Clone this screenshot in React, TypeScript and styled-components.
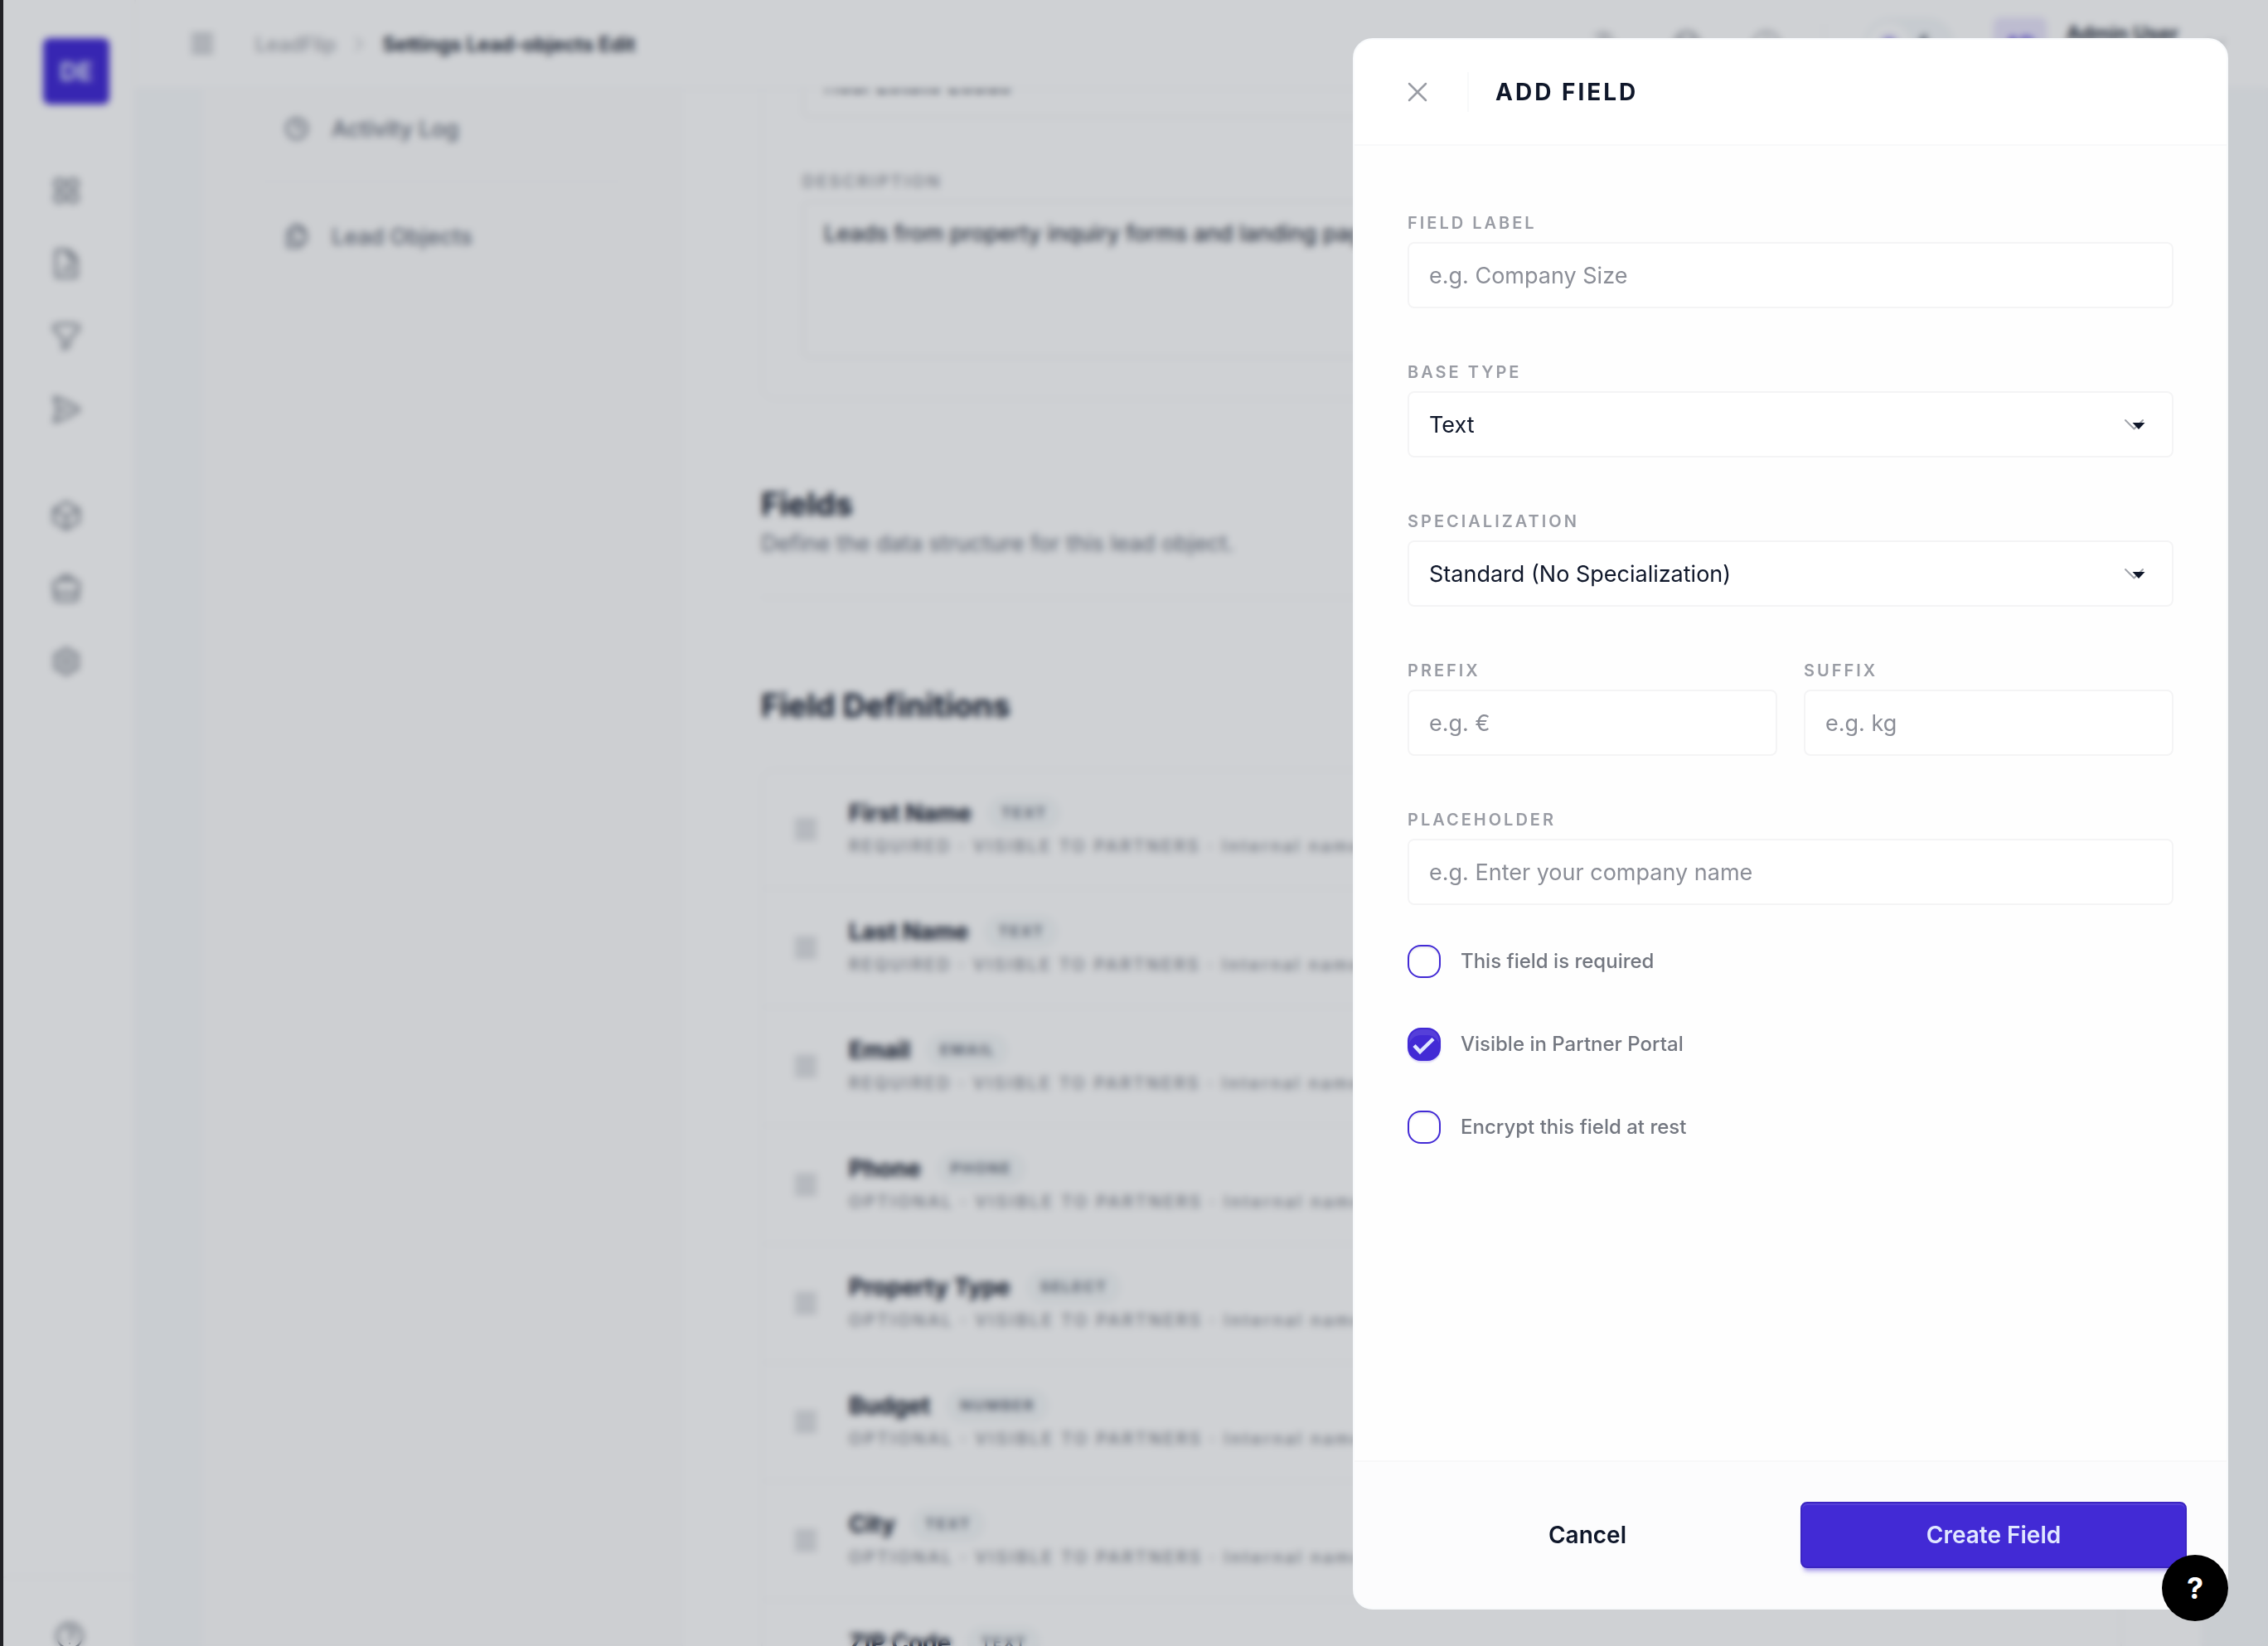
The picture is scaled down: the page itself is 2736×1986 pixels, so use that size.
import React, { useId } from "react";
import styled, { createGlobalStyle } from "styled-components";
import {
  HiOutlineBriefcase,
  HiOutlineChevronDown,
  HiOutlineChevronRight,
  HiOutlineClock,
  HiOutlineCog6Tooth,
  HiOutlineCube,
  HiOutlineDocumentChartBar,
  HiOutlineDocumentDuplicate,
  HiOutlineFunnel,
  HiOutlineGlobeAlt,
  HiOutlineLanguage,
  HiOutlinePaperAirplane,
  HiOutlinePencilSquare,
  HiOutlineQuestionMarkCircle,
  HiOutlineSquares2X2,
  HiOutlineTrash,
  HiMoon,
  HiSun,
} from "react-icons/hi2";

const ink = "#0f172a";
const primary = "#422ad5";
const line = "#f4f4f5";
const softLine = "#f8f9fa";
const muted = "#9fa2a9";

const GlobalStyle = createGlobalStyle`
  *, *::before, *::after { box-sizing: border-box; }
  body { margin: 0; background: #fff; }
  button, input, select, textarea { font: inherit; color: inherit; }
  h1, h2, h3, p { margin: 0; }
`;

const Shell = styled.div`
  position: relative;
  height: 100vh;
  overflow: hidden;
  border-left: 4px solid #222226;
  font-family: Inter, "Liberation Sans", sans-serif;
  font-size: 27px;
  color: ${ink};
`;

const Page = styled.div`
  display: flex;
  height: 100%;
  background: #f8fafc;
`;

/* ---------- sidebar ---------- */

const Sidebar = styled.aside`
  flex: 0 0 160px;
  display: flex;
  flex-direction: column;
  background: #fff;
  border-right: 2px solid ${softLine};
`;

const Logo = styled.div`
  display: grid;
  place-items: center;
  width: 80px;
  height: 80px;
  margin: 46px 0 64px 48px;
  border-radius: 8px;
  background: ${primary};
  color: #e0e7ff;
  font-size: 30px;
  font-weight: 700;
`;

const IconNav = styled.nav`
  display: flex;
  flex-direction: column;
  gap: 48px;
  padding: 0 36px;
`;

const IconGroup = styled.div`
  display: flex;
  flex-direction: column;
  align-items: flex-start;
  gap: 8px;
`;

const IconLink = styled.a`
  display: grid;
  place-items: center;
  width: 80px;
  height: 80px;
  color: #5f6672;
  svg { width: 40px; height: 40px; }
`;

const SidebarFoot = styled.div`
  margin-top: auto;
  height: 84px;
  padding: 30px 36px 0 40px;
  border-top: 2px solid ${softLine};
`;

/* ---------- top bar ---------- */

const Column = styled.div`
  flex: 1;
  min-width: 0;
  display: flex;
  flex-direction: column;
`;

const TopBar = styled.header`
  flex: 0 0 108px;
  display: flex;
  align-items: center;
  justify-content: space-between;
  padding: 0 48px 0 66px;
  background: #fff;
  border-bottom: 2px solid ${softLine};
`;

const MenuButton = styled.button`
  display: grid;
  place-items: center;
  padding: 0;
  border: 0;
  background: none;
  color: #b9bcc2;
`;

const BarButton = styled(MenuButton)`
  color: #a1a4ab;
  svg { width: 40px; height: 40px; }
`;

const Crumbs = styled.nav`
  display: flex;
  align-items: center;
  gap: 16px;
  font-size: 24px;
  font-weight: 500;
  color: #a6a9b0;
  a { color: inherit; text-decoration: none; margin-left: 34px; }
  strong { font-weight: 600; color: ${ink}; }
`;

const BarTools = styled.div`
  display: flex;
  align-items: center;
  gap: 48px;
`;

const BarIcons = styled.div`
  display: flex;
  gap: 56px;
`;

const Rule = styled.span`
  width: 2px;
  height: 48px;
  background: ${softLine};
`;

const ThemeSwitch = styled.button`
  display: flex;
  align-items: center;
  gap: 8px;
  height: 64px;
  padding: 4px 16px 4px 4px;
  border: 0;
  border-radius: 32px;
  background: #f5f8fa;
  color: #6b7280;
  svg { width: 28px; height: 28px; }
`;

const Thumb = styled.span`
  display: grid;
  place-items: center;
  width: 52px;
  height: 52px;
  border-radius: 50%;
  background: #fff;
  color: ${primary};
`;

const User = styled.div`
  display: flex;
  align-items: center;
  gap: 24px;
  svg { width: 28px; height: 28px; margin-left: 8px; color: ${muted}; }
`;

const Avatar = styled.span`
  display: grid;
  place-items: center;
  width: 64px;
  height: 64px;
  border-radius: 8px;
  background: #e9e5fb;
  color: ${primary};
  font-size: 24px;
  font-weight: 700;
`;

const UserText = styled.span`
  display: flex;
  flex-direction: column;
  font-size: 24px;
  line-height: 30px;
  font-weight: 600;
  small { font-size: 20px; line-height: 24px; font-weight: 500; color: ${muted}; }
`;

/* ---------- page body ---------- */

const Sheet = styled.main`
  flex: 1;
  min-height: 0;
  display: flex;
  margin: 0 80px;
  overflow: hidden;
  background: #fff;
`;

const SubNav = styled.nav`
  flex: 0 0 580px;
  padding: 4px 72px 0;
  background: #fdfdfd;
  border-right: 2px solid #fbfbfc;
`;

const SubLink = styled.a`
  display: flex;
  align-items: center;
  gap: 26px;
  height: 86px;
  padding-left: 26px;
  font-weight: 500;
  color: #6b7280;
  text-decoration: none;
  svg { width: 32px; height: 32px; stroke-width: 2; }
`;

const SubRule = styled.hr`
  height: 2px;
  margin: 20px 0 22px;
  border: 0;
  background: #fafafb;
`;

const Content = styled.div`
  flex: 1;
  min-width: 0;
  margin-top: -148px;
  padding: 0 96px 0 94px;
`;

const Card = styled.section`
  display: flex;
  flex-direction: column;
  gap: 48px;
  padding: 48px;
  border: 2px solid ${softLine};
  border-radius: 16px;
`;

const SectionTitle = styled.h2<{ $top: number }>`
  margin-top: ${(p) => p.$top}px;
  font-size: 38px;
  line-height: 48px;
  font-weight: 700;
`;

const SectionNote = styled.p`
  line-height: 48px;
  padding-bottom: 40px;
  border-bottom: 2px solid ${softLine};
  color: #6b7280;
`;

const FieldList = styled.ul`
  margin: 53px 0 0;
  padding: 0;
  list-style: none;
  border: 2px solid ${softLine};
  border-radius: 16px;
`;

const FieldRow = styled.li`
  display: flex;
  align-items: center;
  gap: 32px;
  height: 143px;
  padding: 0 40px 0 32px;
  border-bottom: 2px solid ${softLine};
`;

const Handle = styled.span`
  display: grid;
  place-items: center;
  width: 40px;
  color: #c9ccd1;
`;

const RowText = styled.div`
  flex: 1;
  display: flex;
  flex-direction: column;
  min-width: 0;
`;

const RowTitle = styled.h3`
  display: flex;
  align-items: center;
  gap: 20px;
  font-size: 28px;
  line-height: 40px;
  font-weight: 700;
`;

const Badge = styled.span`
  padding: 0 16px;
  border-radius: 20px;
  background: #f6f9fa;
  color: #6b7280;
  font-size: 18px;
  font-weight: 700;
  letter-spacing: 2px;
`;

const RowMeta = styled.p`
  font-size: 20px;
  line-height: 40px;
  font-weight: 500;
  letter-spacing: 3px;
  color: #868a93;
`;

const RowTools = styled.div`
  display: flex;
  gap: 28px;
  color: ${muted};
  svg { width: 32px; height: 32px; }
`;

/* ---------- form parts ---------- */

const FieldBox = styled.div`
  display: flex;
  flex-direction: column;
  gap: 8px;
  padding-top: 14px;
  flex: 1;
  min-width: 0;
`;

const Label = styled.label`
  font-size: 20px;
  line-height: 30px;
  font-weight: 600;
  letter-spacing: 3px;
  text-transform: uppercase;
  color: #999ca4;
`;

const Input = styled.input`
  width: 100%;
  height: 80px;
  padding: 0 24px;
  border: 2px solid ${line};
  border-radius: 8px;
  background: #fff;
  outline: none;
  &::placeholder { color: #8b8e97; opacity: 1; }
`;

const TextArea = styled.textarea`
  width: 100%;
  height: 190px;
  padding: 16px 24px;
  border: 2px solid ${line};
  border-radius: 8px;
  background: #fff;
  line-height: 44px;
  resize: none;
`;

const SelectWrap = styled.div`
  position: relative;
  display: grid;
  svg {
    position: absolute;
    right: 32px;
    top: 32px;
    width: 28px;
    height: 16px;
    pointer-events: none;
  }
`;

const Select = styled.select`
  appearance: none;
  height: 80px;
  padding: 0 72px 0 24px;
  border: 2px solid ${line};
  border-radius: 8px;
  background: #fff;
  outline: none;
`;

/* ---------- drawer ---------- */

const Overlay = styled.div`
  position: absolute;
  inset: 0;
  display: flex;
  justify-content: flex-end;
  padding: 46px 48px 44px;
  background: rgba(15, 23, 42, 0.2);
  backdrop-filter: blur(4px);
`;

const Drawer = styled.section`
  display: flex;
  flex-direction: column;
  width: 1056px;
  max-width: 100%;
  overflow: hidden;
  border: 2px solid #f8fafc;
  border-radius: 24px;
  background: #fefefe;
`;

const DrawerHead = styled.header`
  flex: 0 0 128px;
  display: flex;
  align-items: center;
  gap: 32px;
  padding: 0 52px;
  border-bottom: 2px solid ${softLine};
  background: #fff;
`;

const CloseButton = styled.button`
  display: grid;
  place-items: center;
  width: 48px;
  height: 48px;
  margin-right: 4px;
  padding: 0;
  border: 0;
  background: none;
  color: #9a9da5;
`;

const DrawerTitle = styled.h1`
  font-size: 28px;
  font-weight: 700;
  letter-spacing: 3px;
  text-transform: uppercase;
`;

const Form = styled.form`
  flex: 1;
  min-height: 0;
  display: flex;
  flex-direction: column;
`;

const DrawerBody = styled.div`
  flex: 1;
  min-height: 0;
  display: flex;
  flex-direction: column;
  gap: 48px;
  padding: 64px;
  & > * { flex: none; }
`;

const Pair = styled.div`
  display: flex;
  gap: 32px;
`;

const Checks = styled.div`
  display: flex;
  flex-direction: column;
  gap: 60px;
`;

const CheckLabel = styled.label`
  display: flex;
  align-items: center;
  gap: 24px;
  font-size: 24px;
  line-height: 40px;
  font-weight: 500;
  color: #737780;
`;

const CheckMark = styled.span`
  display: grid;
  width: 40px;
  height: 40px;
  svg, input { grid-area: 1 / 1; }
  svg { width: 40px; height: 40px; pointer-events: none; visibility: hidden; z-index: 1; }
  input:checked + svg { visibility: visible; }
`;

const CheckInput = styled.input`
  appearance: none;
  width: 40px;
  height: 40px;
  margin: 0;
  border: 2px solid ${primary};
  border-radius: 16px;
  background: #fff;
  box-shadow: inset 0 2px 2px rgba(15, 23, 42, 0.08);
  &:checked {
    background: ${primary};
    box-shadow: inset 0 8px 0 -1px rgba(255, 255, 255, 0.1), 0 2px 2px rgba(66, 42, 213, 0.2);
  }
`;

const DrawerFoot = styled.footer`
  display: flex;
  gap: 24px;
  padding: 48px;
  border-top: 2px solid #f8f8f9;
  background: #fcfcfd;
`;

const ActionButton = styled.button<{ $primary?: boolean }>`
  flex: 1;
  height: 80px;
  border: 2px solid ${(p) => (p.$primary ? "#3b25c1" : "transparent")};
  border-radius: 8px;
  background: ${(p) => (p.$primary ? primary : "transparent")};
  color: ${(p) => (p.$primary ? "#e0e7ff" : ink)};
  font-size: 28px;
  font-weight: 600;
  box-shadow: ${(p) =>
    p.$primary
      ? "inset 0 2px 0 rgba(255,255,255,.1), 0 6px 4px -4px rgba(66,42,213,.3), 0 8px 6px -4px rgba(66,42,213,.3)"
      : "none"};
`;

const HelpButton = styled.button`
  position: absolute;
  right: 48px;
  bottom: 30px;
  width: 80px;
  height: 80px;
  padding: 0;
  border: 0;
  border-radius: 50%;
  background: #000;
  color: #fff;
  font-size: 36px;
  font-weight: 700;
`;

/* ---------- composed controls ---------- */

function GripIcon() {
  return (
    <svg width="28" height="28" viewBox="0 0 28 28" fill="none" aria-hidden="true">
      <path d="M1 3h26M1 10h26M1 17h26M1 24h26" stroke="currentColor" strokeWidth="4" />
    </svg>
  );
}

function TextField({ label, placeholder, value }: { label: string; placeholder?: string; value?: string }) {
  const id = useId();
  return (
    <FieldBox>
      <Label htmlFor={id}>{label}</Label>
      <Input id={id} type="text" placeholder={placeholder} defaultValue={value} />
    </FieldBox>
  );
}

function SelectField({ label, options }: { label: string; options: string[] }) {
  const id = useId();
  return (
    <FieldBox>
      <Label htmlFor={id}>{label}</Label>
      <SelectWrap>
        <Select id={id}>
          {options.map((o) => (
            <option key={o}>{o}</option>
          ))}
        </Select>
        <svg viewBox="0 0 28 16" fill="none" aria-hidden="true">
          <path d="M2 3l10.500 10.500L23 3" stroke="#a1a4ab" strokeWidth="2" strokeLinecap="round" strokeLinejoin="round" />
          <path d="M10.500 6h15L18 14z" fill={ink} />
        </svg>
      </SelectWrap>
    </FieldBox>
  );
}

function CheckField({ label, checked }: { label: string; checked?: boolean }) {
  return (
    <CheckLabel>
      <CheckMark>
        <CheckInput type="checkbox" defaultChecked={checked} />
        <svg viewBox="0 0 40 40" fill="none" aria-hidden="true">
          <path d="M8 21.500l7 7.500L31 13.500" stroke="#e0e7ff" strokeWidth="4.500" />
        </svg>
      </CheckMark>
      {label}
    </CheckLabel>
  );
}

const mainNav = [
  [
    ["Dashboard", HiOutlineSquares2X2],
    ["Reports", HiOutlineDocumentChartBar],
    ["Funnels", HiOutlineFunnel],
    ["Campaigns", HiOutlinePaperAirplane],
  ],
  [
    ["Products", HiOutlineCube],
    ["Business", HiOutlineBriefcase],
    ["Settings", HiOutlineCog6Tooth],
  ],
] as const;

const fields = [
  ["First Name", "TEXT", "REQUIRED"],
  ["Last Name", "TEXT", "REQUIRED"],
  ["Email", "EMAIL", "REQUIRED"],
  ["Phone", "PHONE", "OPTIONAL"],
  ["Property Type", "SELECT", "OPTIONAL"],
  ["Budget", "NUMBER", "OPTIONAL"],
  ["City", "TEXT", "OPTIONAL"],
  ["ZIP Code", "TEXT", "OPTIONAL"],
];

export default function App() {
  const descriptionId = useId();
  return (
    <Shell>
      <GlobalStyle />
      <Page>
        <Sidebar>
          <Logo>DE</Logo>
          <IconNav>
            {mainNav.map((group, i) => (
              <IconGroup key={i}>
                {group.map(([name, Icon]) => (
                  <IconLink key={name} href="#" aria-label={name}>
                    <Icon />
                  </IconLink>
                ))}
              </IconGroup>
            ))}
          </IconNav>
          <SidebarFoot>
            <IconLink href="#" aria-label="Help">
              <HiOutlineQuestionMarkCircle />
            </IconLink>
          </SidebarFoot>
        </Sidebar>

        <Column>
          <TopBar>
            <Crumbs>
              <MenuButton type="button" aria-label="Toggle menu">
                <GripIcon />
              </MenuButton>
              <a href="#">LeadFlip</a>
              <HiOutlineChevronRight />
              <strong>Settings Lead-objects Edit</strong>
            </Crumbs>
            <BarTools>
              <BarIcons>
                <BarButton type="button" aria-label="Language">
                  <HiOutlineLanguage />
                </BarButton>
                <BarButton type="button" aria-label="Region">
                  <HiOutlineGlobeAlt />
                </BarButton>
                <BarButton type="button" aria-label="Recent">
                  <HiOutlineClock />
                </BarButton>
              </BarIcons>
              <Rule />
              <ThemeSwitch type="button" aria-label="Theme">
                <Thumb>
                  <HiSun />
                </Thumb>
                <HiMoon />
              </ThemeSwitch>
              <User>
                <Avatar>AD</Avatar>
                <UserText>
                  Admin User
                  <small>Admin</small>
                </UserText>
                <HiOutlineChevronDown />
              </User>
            </BarTools>
          </TopBar>

          <Sheet>
            <SubNav>
              <SubLink href="#">
                <HiOutlineClock />
                Activity Log
              </SubLink>
              <SubRule />
              <SubLink href="#">
                <HiOutlineDocumentDuplicate />
                Lead Objects
              </SubLink>
            </SubNav>
            <Content>
              <Card>
                <TextField label="Name" value="Real Estate Leads" />
                <FieldBox>
                  <Label htmlFor={descriptionId}>Description</Label>
                  <TextArea
                    id={descriptionId}
                    defaultValue="Leads from property inquiry forms and landing pages."
                  />
                </FieldBox>
              </Card>
              <SectionTitle $top={102}>Fields</SectionTitle>
              <SectionNote>Define the data structure for this lead object.</SectionNote>
              <SectionTitle $top={105}>Field Definitions</SectionTitle>
              <FieldList>
                {fields.map(([name, type, need]) => (
                  <FieldRow key={name}>
                    <Handle>
                      <GripIcon />
                    </Handle>
                    <RowText>
                      <RowTitle>
                        {name}
                        <Badge>{type}</Badge>
                      </RowTitle>
                      <RowMeta>{need} · VISIBLE TO PARTNERS · Internal name</RowMeta>
                    </RowText>
                    <RowTools>
                      <HiOutlinePencilSquare />
                      <HiOutlineTrash />
                    </RowTools>
                  </FieldRow>
                ))}
              </FieldList>
            </Content>
          </Sheet>
        </Column>
      </Page>

      <Overlay>
        <Drawer role="dialog" aria-labelledby="drawer-title">
          <DrawerHead>
            <CloseButton type="button" aria-label="Close">
              <svg width="24" height="24" viewBox="0 0 24 24" fill="none" aria-hidden="true">
                <path d="M2 2l20 20M22 2L2 22" stroke="currentColor" strokeWidth="2.500" strokeLinecap="round" />
              </svg>
            </CloseButton>
            <Rule />
            <DrawerTitle id="drawer-title">Add Field</DrawerTitle>
          </DrawerHead>
          <Form onSubmit={(e: React.FormEvent) => e.preventDefault()}>
            <DrawerBody>
              <TextField label="Field Label" placeholder="e.g. Company Size" />
              <SelectField label="Base Type" options={["Text", "Number", "Email", "Phone", "Select"]} />
              <SelectField label="Specialization" options={["Standard (No Specialization)"]} />
              <Pair>
                <TextField label="Prefix" placeholder="e.g. €" />
                <TextField label="Suffix" placeholder="e.g. kg" />
              </Pair>
              <TextField label="Placeholder" placeholder="e.g. Enter your company name" />
              <Checks>
                <CheckField label="This field is required" />
                <CheckField label="Visible in Partner Portal" checked />
                <CheckField label="Encrypt this field at rest" />
              </Checks>
            </DrawerBody>
            <DrawerFoot>
              <ActionButton type="button">Cancel</ActionButton>
              <ActionButton type="submit" $primary>
                Create Field
              </ActionButton>
            </DrawerFoot>
          </Form>
        </Drawer>
      </Overlay>
      <HelpButton type="button" aria-label="Help">
        ?
      </HelpButton>
    </Shell>
  );
}
